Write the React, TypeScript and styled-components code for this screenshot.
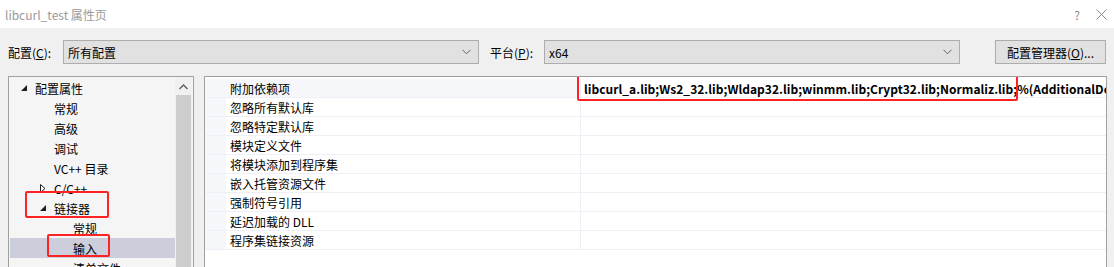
import styled, { createGlobalStyle } from "styled-components";

const GlobalStyle = createGlobalStyle`
  html, body {
    margin: 0;
    padding: 0;
    overflow: hidden;
    background: #f0f0f0;
  }
  body {
    font-family: "Noto Sans CJK SC", "Noto Sans", sans-serif;
    font-size: 12px;
    color: #000;
  }
`;

const Window = styled.div`
  width: 1114px;
  height: 267px;
  display: flex;
  flex-direction: column;
  overflow: hidden;
`;

const TitleBar = styled.div`
  height: 28px;
  flex: none;
  background: #fff;
  display: flex;
  align-items: center;
  padding: 0 1px 0 5px;
  color: #9a9a9a;
  font-size: 12px;
`;

const TitleText = styled.span`
  flex: 1;
`;

const TitleButton = styled.span`
  width: 24px;
  display: flex;
  justify-content: center;
  color: #8a8a8a;
  font-size: 12px;
`;

const Toolbar = styled.div`
  display: flex;
  align-items: center;
  padding: 12px 8px 0 8px;
  height: 24px;
  flex: none;
`;

const Label = styled.span<{ $w: number; $ml?: number }>`
  width: ${(p) => p.$w}px;
  margin-left: ${(p) => p.$ml ?? 0}px;
  flex: none;
  white-space: nowrap;
`;

const Combo = styled.div<{ $w: number }>`
  width: ${(p) => p.$w}px;
  height: 24px;
  box-sizing: border-box;
  border: 1px solid #adadad;
  background: #e1e1e1;
  display: flex;
  align-items: center;
  padding: 0 7px 0 4px;
  flex: none;
`;

const ComboText = styled.span`
  flex: 1;
`;

const Button = styled.div`
  margin-left: auto;
  width: 111px;
  height: 24px;
  box-sizing: border-box;
  border: 1px solid #adadad;
  background: #e1e1e1;
  display: flex;
  align-items: center;
  justify-content: center;
`;

const Body = styled.div`
  display: flex;
  gap: 10px;
  padding: 12px 7px 0 8px;
  flex: 1;
  min-height: 0;
`;

const TreePanel = styled.div`
  width: 186px;
  box-sizing: border-box;
  border: 1px solid #a0a0a0;
  border-bottom: none;
  background: #f5f5f5;
  display: flex;
  flex: none;
`;

const Tree = styled.div`
  flex: 1;
  padding: 1px 0 0 1px;
  display: flex;
  flex-direction: column;
`;

const TreeRow = styled.div<{ $level: number; $selected?: boolean }>`
  height: 20px;
  display: flex;
  align-items: center;
  position: relative;
  padding-left: ${(p) => 11 + p.$level * 19}px;
  background: ${(p) => (p.$selected ? "#cccedb" : "transparent")};
  white-space: nowrap;
`;

const Expander = styled.span`
  width: 14px;
  height: 20px;
  display: flex;
  align-items: center;
  flex: none;
`;

const Scrollbar = styled.div`
  width: 17px;
  flex: none;
  background: #f0f0f0;
  display: flex;
  flex-direction: column;
  align-items: center;
  margin-right: 1px;
`;

const ScrollArrow = styled.div`
  height: 16px;
  display: flex;
  align-items: center;
  justify-content: center;
  margin-top: 2px;
`;

const ScrollThumb = styled.div`
  width: 15px;
  flex: 1;
  background: #cdcdcd;
`;

const Mark = styled.div<{ $t: number; $l: number; $w: number; $h: number }>`
  position: absolute;
  top: ${(p) => p.$t}px;
  left: ${(p) => p.$l}px;
  width: ${(p) => p.$w}px;
  height: ${(p) => p.$h}px;
  box-sizing: border-box;
  border: 2px solid #ff2222;
  border-radius: 2px;
  pointer-events: none;
`;

const GridPanel = styled.div`
  flex: 1;
  box-sizing: border-box;
  border: 1px solid #a0a0a0;
  border-bottom: none;
  background: #fff;
  padding-top: 2px;
  overflow: hidden;
`;

const GridRow = styled.div`
  display: grid;
  grid-template-columns: 21px 355px 1fr;
  height: 19px;
  box-sizing: border-box;
  border-bottom: 1px solid #eef0f6;
  background: #fff;
`;

const Gutter = styled.div`
  background: #f5f7fb;
`;

const NameCell = styled.div<{ $focus?: boolean }>`
  padding-left: 4px;
  display: flex;
  align-items: center;
  border-right: 1px solid #eef0f6;
  background: ${(p) => (p.$focus ? "#f5f7fb" : "#fff")};
  white-space: nowrap;
`;

const ValueCell = styled.div`
  position: relative;
  padding-left: 3px;
  display: flex;
  align-items: center;
  white-space: nowrap;
  font-weight: bold;
  font-size: 12px;
  letter-spacing: 0.02px;
`;

const Chevron = () => (
  <svg width="9" height="6" viewBox="0 0 9 6">
    <path d="M0.5 0.8 L4.5 4.8 L8.5 0.8" fill="none" stroke="#606060" strokeWidth="1" />
  </svg>
);

const Open = () => (
  <svg width="6" height="6" viewBox="0 0 6 6">
    <path d="M6 0 L6 6 L0 6 Z" fill="#1e1e1e" />
  </svg>
);

const Closed = () => (
  <svg width="6" height="9" viewBox="0 0 6 9">
    <path d="M0.5 0.5 L5 4.5 L0.5 8.5 Z" fill="none" stroke="#1e1e1e" strokeWidth="1" />
  </svg>
);

type Box = { t: number; l: number; w: number; h: number };

const treeItems: { text: string; level: number; exp?: "open" | "closed"; selected?: boolean; mark?: Box }[] = [
  { text: "配置属性", level: 0, exp: "open" },
  { text: "常规", level: 1 },
  { text: "高级", level: 1 },
  { text: "调试", level: 1 },
  { text: "VC++ 目录", level: 1 },
  { text: "C/C++", level: 1, exp: "closed" },
  { text: "链接器", level: 1, exp: "open", mark: { t: -7, l: 15, w: 84, h: 27 } },
  { text: "常规", level: 2 },
  { text: "输入", level: 2, selected: true, mark: { t: -4, l: 37, w: 63, h: 23 } },
  { text: "清单文件", level: 2 },
];

const props = [
  "附加依赖项",
  "忽略所有默认库",
  "忽略特定默认库",
  "模块定义文件",
  "将模块添加到程序集",
  "嵌入托管资源文件",
  "强制符号引用",
  "延迟加载的 DLL",
  "程序集链接资源",
];

export default function App() {
  return (
    <Window>
      <GlobalStyle />
      <TitleBar>
        <TitleText>libcurl_test 属性页</TitleText>
        <TitleButton>?</TitleButton>
        <TitleButton>
          <svg width="11" height="11" viewBox="0 0 11 11">
            <path d="M0.5 0.5 L10.5 10.5 M10.5 0.5 L0.5 10.5" stroke="#8a8a8a" strokeWidth="1" />
          </svg>
        </TitleButton>
      </TitleBar>
      <Toolbar>
        <Label $w={55}>
          配置(<u>C</u>):
        </Label>
        <Combo $w={416}>
          <ComboText>所有配置</ComboText>
          <Chevron />
        </Combo>
        <Label $w={54} $ml={11}>
          平台(<u>P</u>):
        </Label>
        <Combo $w={416}>
          <ComboText>x64</ComboText>
          <Chevron />
        </Combo>
        <Button>
          配置管理器(<u>O</u>)...
        </Button>
      </Toolbar>
      <Body>
        <TreePanel>
          <Tree>
            {treeItems.map((it, i) => (
              <TreeRow key={i} $level={it.level} $selected={it.selected}>
                <Expander>
                  {it.exp === "open" && <Open />}
                  {it.exp === "closed" && <Closed />}
                </Expander>
                {it.text}
                {it.mark && <Mark $t={it.mark.t} $l={it.mark.l} $w={it.mark.w} $h={it.mark.h} />}
              </TreeRow>
            ))}
          </Tree>
          <Scrollbar>
            <ScrollArrow>
              <svg width="9" height="6" viewBox="0 0 9 6">
                <path d="M0.5 5 L4.5 1 L8.5 5" fill="none" stroke="#606060" strokeWidth="1.4" />
              </svg>
            </ScrollArrow>
            <ScrollThumb />
          </Scrollbar>
        </TreePanel>
        <GridPanel>
          {props.map((p, i) => (
            <GridRow key={i}>
              <Gutter />
              <NameCell $focus={i === 0}>{p}</NameCell>
              <ValueCell>
                {i === 0 && (
                  <>
                    libcurl_a.lib;Ws2_32.lib;Wldap32.lib;winmm.lib;Crypt32.lib;Normaliz.lib;%(AdditionalDependencies)
                    <Mark $t={-7} $l={-4} $w={441} $h={29} />
                  </>
                )}
              </ValueCell>
            </GridRow>
          ))}
        </GridPanel>
      </Body>
    </Window>
  );
}
